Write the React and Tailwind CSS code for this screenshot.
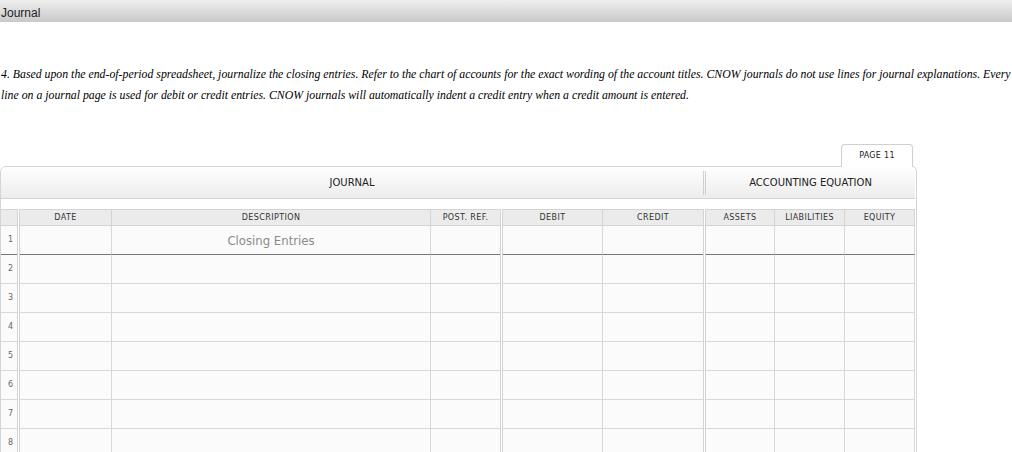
import React from "react";

const sans = { fontFamily: "'DejaVu Sans', 'Liberation Sans', sans-serif" };

function Sep({ className = "" }) {
  return <div className={"w-[3px] shrink-0 border-x border-[#d4d4d4] bg-white " + className} />;
}

function Row({ n, dark, children }) {
  const b = dark ? "border-b-[#767676]" : "border-b-[#d8d8d8]";
  const cell = "h-[29px] shrink-0 border-b bg-[#fbfbfb] " + b;
  return (
    <div className="flex">
      <div className={cell + " w-[16px] flex items-center pl-[7px] text-[8px] text-[#666]"}>{n}</div>
      <Sep />
      <div className={cell + " w-[92px] border-r border-r-[#d8d8d8]"} />
      <div className={cell + " w-[319px] border-r border-r-[#d8d8d8] flex items-center justify-center"}>
        {children}
      </div>
      <div className={cell + " w-[69px]"} />
      <Sep />
      <div className={cell + " w-[100px] border-r border-r-[#d8d8d8]"} />
      <div className={cell + " w-[100px]"} />
      <Sep />
      <div className={cell + " w-[69px] border-r border-r-[#d8d8d8]"} />
      <div className={cell + " w-[70px] border-r border-r-[#d8d8d8]"} />
      <div className={cell + " w-[70px] border-r border-r-[#d8d8d8]"} />
    </div>
  );
}

export default function App() {
  const head =
    "h-[17px] shrink-0 border-y border-[#d4d4d4] bg-[#ebebeb] flex items-center justify-center text-[8px] tracking-[0.4px] text-[#333]";

  return (
    <div className="w-[1012px] h-[452px] overflow-hidden bg-white">
      {/* title bar */}
      <div className="h-[22px] flex items-center pl-[1px] pt-[3px] bg-linear-to-b from-[#efefef] to-[#c9c9c9]">
        <span className="text-[12px] text-[#222]" style={{ fontFamily: "'Liberation Sans', sans-serif" }}>
          Journal
        </span>
      </div>

      {/* instructions */}
      <div
        className="mt-[42px] pl-[1px] text-[11.8px] leading-[21px] italic text-black whitespace-nowrap"
        style={{ fontFamily: "'Liberation Serif', serif" }}
      >
        <div>
          4. Based upon the end-of-period spreadsheet, journalize the closing entries. Refer to the chart of accounts for
          the exact wording of the account titles. CNOW journals do not use lines for journal explanations. Every
        </div>
        <div>
          line on a journal page is used for debit or credit entries. CNOW journals will automatically indent a credit
          entry when a credit amount is entered.
        </div>
      </div>

      {/* journal */}
      <div className="mt-[38px] w-[917px]" style={sans}>
        <div className="flex justify-end pr-[4px]">
          <div className="relative z-10 -mb-px h-[23px] w-[72px] rounded-t-[4px] border border-b-0 border-[#cfcfcf] bg-white flex items-center justify-center text-[8px] tracking-[0.3px] text-[#222]">
            PAGE 11
          </div>
        </div>

        <div className="rounded-tl-[6px] rounded-tr-[5px] border border-[#d4d4d4] pr-[1px]">
          {/* section header */}
          <div className="h-[32px] flex items-center rounded-tl-[5px] rounded-tr-[4px] border-b border-[#d4d4d4] bg-linear-to-b from-white to-[#ececec]">
            <div className="w-[702px] text-center text-[10px] text-[#222]">JOURNAL</div>
            <div className="w-[3px] h-[24px] border-x border-[#cfcfcf]" />
            <div className="flex-1 text-center text-[10px] text-[#222]">ACCOUNTING EQUATION</div>
          </div>

          <div className="h-[10px] bg-white" />

          {/* column headers */}
          <div className="flex">
            <div className={head + " w-[16px]"} />
            <Sep />
            <div className={head + " w-[92px] border-r"}>DATE</div>
            <div className={head + " w-[319px] border-r"}>DESCRIPTION</div>
            <div className={head + " w-[69px]"}>POST. REF.</div>
            <Sep />
            <div className={head + " w-[100px] border-r"}>DEBIT</div>
            <div className={head + " w-[100px]"}>CREDIT</div>
            <Sep />
            <div className={head + " w-[69px] border-r"}>ASSETS</div>
            <div className={head + " w-[70px] border-r"}>LIABILITIES</div>
            <div className={head + " w-[70px] border-r"}>EQUITY</div>
          </div>

          <Row n={1} dark>
            <span
              className="text-[13px] text-[#8a8a8a] pt-[2px]"
              style={{ fontFamily: "'Liberation Sans Narrow', 'DejaVu Sans Condensed', sans-serif" }}
            >
              Closing Entries
            </span>
          </Row>
          {[2, 3, 4, 5, 6, 7, 8, 9].map((n) => (
            <Row key={n} n={n} />
          ))}
        </div>
      </div>
    </div>
  );
}
